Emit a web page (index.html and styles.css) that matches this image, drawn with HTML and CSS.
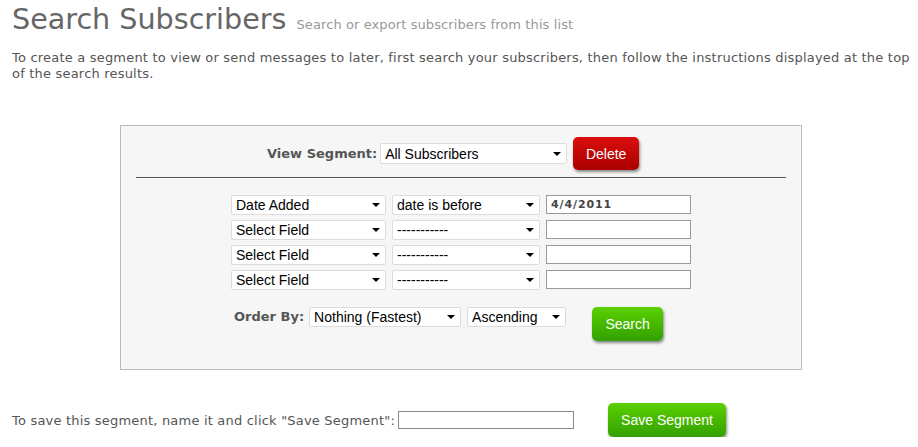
FILE: index.html
```html
<!DOCTYPE html>
<html lang="en">
<head>
  <meta charset="UTF-8">
  <title>Search Subscribers</title>
  <link rel="stylesheet" href="styles.css">
</head>
<body>
  <div class="page">
    <div class="heading">
      <h1>Search Subscribers</h1>
      <span class="subtitle">Search or export subscribers from this list</span>
    </div>
    <p class="intro">To create a segment to view or send messages to later, first search your subscribers, then follow the instructions displayed at the top of the search results.</p>

    <form class="panel" id="searchForm">
      <div class="segment-row">
        <label class="field-label">View Segment:</label>
        <select class="drop seg-select">
          <option>All Subscribers</option>
        </select>
        <button type="button" class="btn btn-red">Delete</button>
      </div>

      <hr class="divider">

      <div class="criteria">
        <div class="crit-row">
          <select class="drop field-select"><option>Date Added</option></select>
          <select class="drop op-select"><option>date is before</option></select>
          <input type="text" class="value-input" value="4/4/2011">
        </div>
        <div class="crit-row">
          <select class="drop field-select"><option>Select Field</option></select>
          <select class="drop op-select"><option>-----------</option></select>
          <input type="text" class="value-input">
        </div>
        <div class="crit-row">
          <select class="drop field-select"><option>Select Field</option></select>
          <select class="drop op-select"><option>-----------</option></select>
          <input type="text" class="value-input">
        </div>
        <div class="crit-row">
          <select class="drop field-select"><option>Select Field</option></select>
          <select class="drop op-select"><option>-----------</option></select>
          <input type="text" class="value-input">
        </div>
      </div>

      <div class="order-row">
        <label class="field-label">Order By:</label>
        <select class="drop order-select"><option>Nothing (Fastest)</option></select>
        <select class="drop dir-select"><option>Ascending</option></select>
        <button type="button" class="btn btn-green search-btn">Search</button>
      </div>
    </form>

    <div class="save-row">
      <span class="save-text">To save this segment, name it and click "Save Segment":</span>
      <input type="text" class="save-input">
      <button type="button" class="btn btn-green save-btn">Save Segment</button>
    </div>
  </div>
</body>
</html>
```

FILE: styles.css
```css
/* Page basics */
body {
  margin: 0;
  background-color: #fff;
  font-family: "DejaVu Sans", Verdana, sans-serif;
  color: #555;
}

.page {
  padding: 0 8px 0 12px;
}

/* Heading */
.heading {
  display: flex;
  align-items: baseline;
  gap: 10px;
  padding-top: 2px;
}

h1 {
  margin: 0;
  font-size: 28.6px;
  font-weight: normal;
  color: #666;
  line-height: 34px;
}

.subtitle {
  font-size: 13px;
  letter-spacing: 0.1px;
  color: #999;
}

.intro {
  margin: 14px 0 0;
  font-size: 13px;
  letter-spacing: 0.2px;
  line-height: 16px;
  color: #555;
}

/* Search panel */
.panel {
  box-sizing: border-box;
  width: 682px;
  height: 245px;
  margin: 43px 0 0 108px;
  padding-top: 11px;
  background-color: #f6f6f6;
  border: 1px solid #bbb;
}

.segment-row {
  display: flex;
  align-items: center;
  padding-left: 146px;
}

.field-label {
  font-size: 13px;
  font-weight: bold;
  color: #555;
  margin-right: 3px;
}

.drop {
  box-sizing: border-box;
  height: 20px;
  padding: 0 18px 0 4px;
  font-family: "Liberation Sans", Arial, sans-serif;
  font-size: 14px;
  color: #000;
  background-color: #fff;
  border: 1px solid #dcdcdc;
  border-radius: 2px;
  -webkit-appearance: none;
  appearance: none;
  background-image: url("data:image/svg+xml;utf8,<svg xmlns='http://www.w3.org/2000/svg' width='8' height='4'><path d='M0 0h8L4 4z' fill='%23000'/></svg>");
  background-repeat: no-repeat;
  background-position: right 5px center;
}

.seg-select {
  width: 187px;
  height: 21px;
}

.btn {
  font-family: "Liberation Sans", Arial, sans-serif;
  font-size: 14px;
  color: #fff;
  border: none;
  border-radius: 5px;
  box-shadow: 1px 2px 3px rgba(0, 0, 0, 0.45);
  cursor: pointer;
}

.btn-red {
  width: 66px;
  height: 33px;
  margin-left: 6px;
  background: linear-gradient(#dc0d0d, #a90000);
}

.btn-green {
  height: 34px;
  background: linear-gradient(#5ad100, #33a000);
}

.divider {
  margin: 7px 15px 0;
  border: none;
  border-top: 1px solid #555;
}

/* Criteria rows */
.criteria {
  display: flex;
  flex-direction: column;
  gap: 5px;
  padding: 17px 0 0 110px;
}

.crit-row {
  display: flex;
  gap: 6px;
}

.field-select {
  width: 155px;
}

.op-select {
  width: 148px;
}

.value-input {
  box-sizing: border-box;
  width: 145px;
  height: 19px;
  padding: 0 4px;
  border: 1px solid #999;
  font-family: "DejaVu Sans", Verdana, sans-serif;
  font-size: 11px;
  letter-spacing: 0.9px;
  font-weight: bold;
  color: #444;
}

.order-row {
  display: flex;
  align-items: flex-start;
  padding: 17px 0 0 113px;
}

.order-row .field-label {
  line-height: 20px;
  margin-right: 5px;
}

.order-select {
  width: 152px;
}

.dir-select {
  width: 99px;
  margin-left: 6px;
}

.search-btn {
  width: 71px;
  margin-left: 26px;
}

/* Save row */
.save-row {
  display: flex;
  align-items: center;
  margin-top: 33px;
}

.save-text {
  font-size: 13px;
  letter-spacing: 0.2px;
  color: #555;
}

.save-input {
  box-sizing: border-box;
  width: 176px;
  height: 18px;
  margin-left: 3px;
  border: 1px solid #888;
}

.save-btn {
  width: 118px;
  margin-left: 34px;
}
```
